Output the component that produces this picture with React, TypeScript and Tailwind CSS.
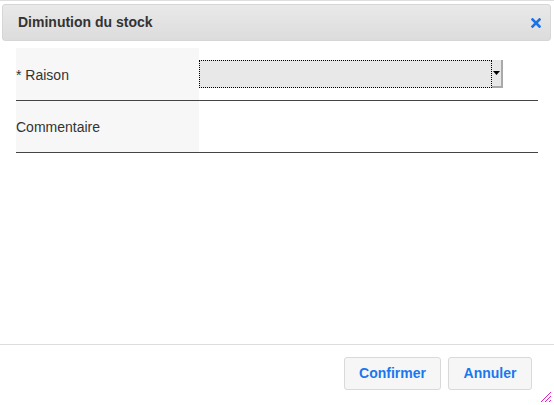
import React from 'react';

const CloseIcon = () => (
  <svg width="10" height="10" viewBox="0 0 10 10">
    <path d="M1.5 1.5 L8.5 8.5 M8.5 1.5 L1.5 8.5" stroke="#1a73e8" strokeWidth="2.6" strokeLinecap="square" />
  </svg>
);

const ResizeGrip = () => (
  <svg width="12" height="12" viewBox="0 0 12 12" className="absolute right-[2px] bottom-[2px]">
    <path d="M1 11 L11 1 M5 11 L11 5 M9 11 L11 9" stroke="#e020c0" strokeWidth="1" />
  </svg>
);

const App = () => {
  return (
    <div
      className="relative flex flex-col w-[554px] h-[405px] bg-white border-t border-[#dedede] text-[#333]"
      style={{ fontFamily: '"Liberation Sans", Arial, sans-serif' }}
    >
      <div className="mt-[3px] ml-[2px] mr-[3px] h-[37px] flex items-center justify-between pl-[15px] pr-[9px] rounded-[3px] border border-[#d6d6d6] bg-gradient-to-b from-[#e9e9e9] to-[#dcdcdc]">
        <span className="text-[14px] font-bold text-[#333]">Diminution du stock</span>
        <CloseIcon />
      </div>

      <div className="mt-[7px] mx-4">
        <div className="flex h-[53px] border-b border-[#444]">
          <div className="w-[183px] bg-[#f7f7f7] flex items-center pt-[2px] text-[14px]">* Raison</div>
          <div className="flex-1 flex items-center">
            <div className="flex w-[304px] h-[28px] bg-[#e8e8e8]">
              <div className="flex-1 border border-dotted border-black" />
              <div className="w-[11px] flex items-center justify-center border-r-[2px] border-b-[2px] border-[#a9a9a9]">
                <svg width="7" height="4" viewBox="0 0 7 4">
                  <path d="M0 0 L7 0 L3.5 4 Z" fill="#000" />
                </svg>
              </div>
            </div>
          </div>
        </div>
        <div className="flex h-[52px] border-b border-[#444]">
          <div className="w-[183px] bg-[#f7f7f7] flex items-center pt-[2px] text-[14px]">Commentaire</div>
          <div className="flex-1" />
        </div>
      </div>

      <div className="mt-auto border-t border-[#dddddd] pt-[12px] pb-[15px] pr-[22px] flex justify-end gap-[7px]">
        <button className="h-[33px] w-[97px] rounded-[3px] border border-[#d9d9d9] bg-[#f6f6f6] text-[14px] font-bold text-[#1a78ee]">
          Confirmer
        </button>
        <button className="h-[33px] w-[84px] rounded-[3px] border border-[#d9d9d9] bg-[#f6f6f6] text-[14px] font-bold text-[#1a78ee]">
          Annuler
        </button>
      </div>

      <ResizeGrip />
    </div>
  );
};

export default App;
